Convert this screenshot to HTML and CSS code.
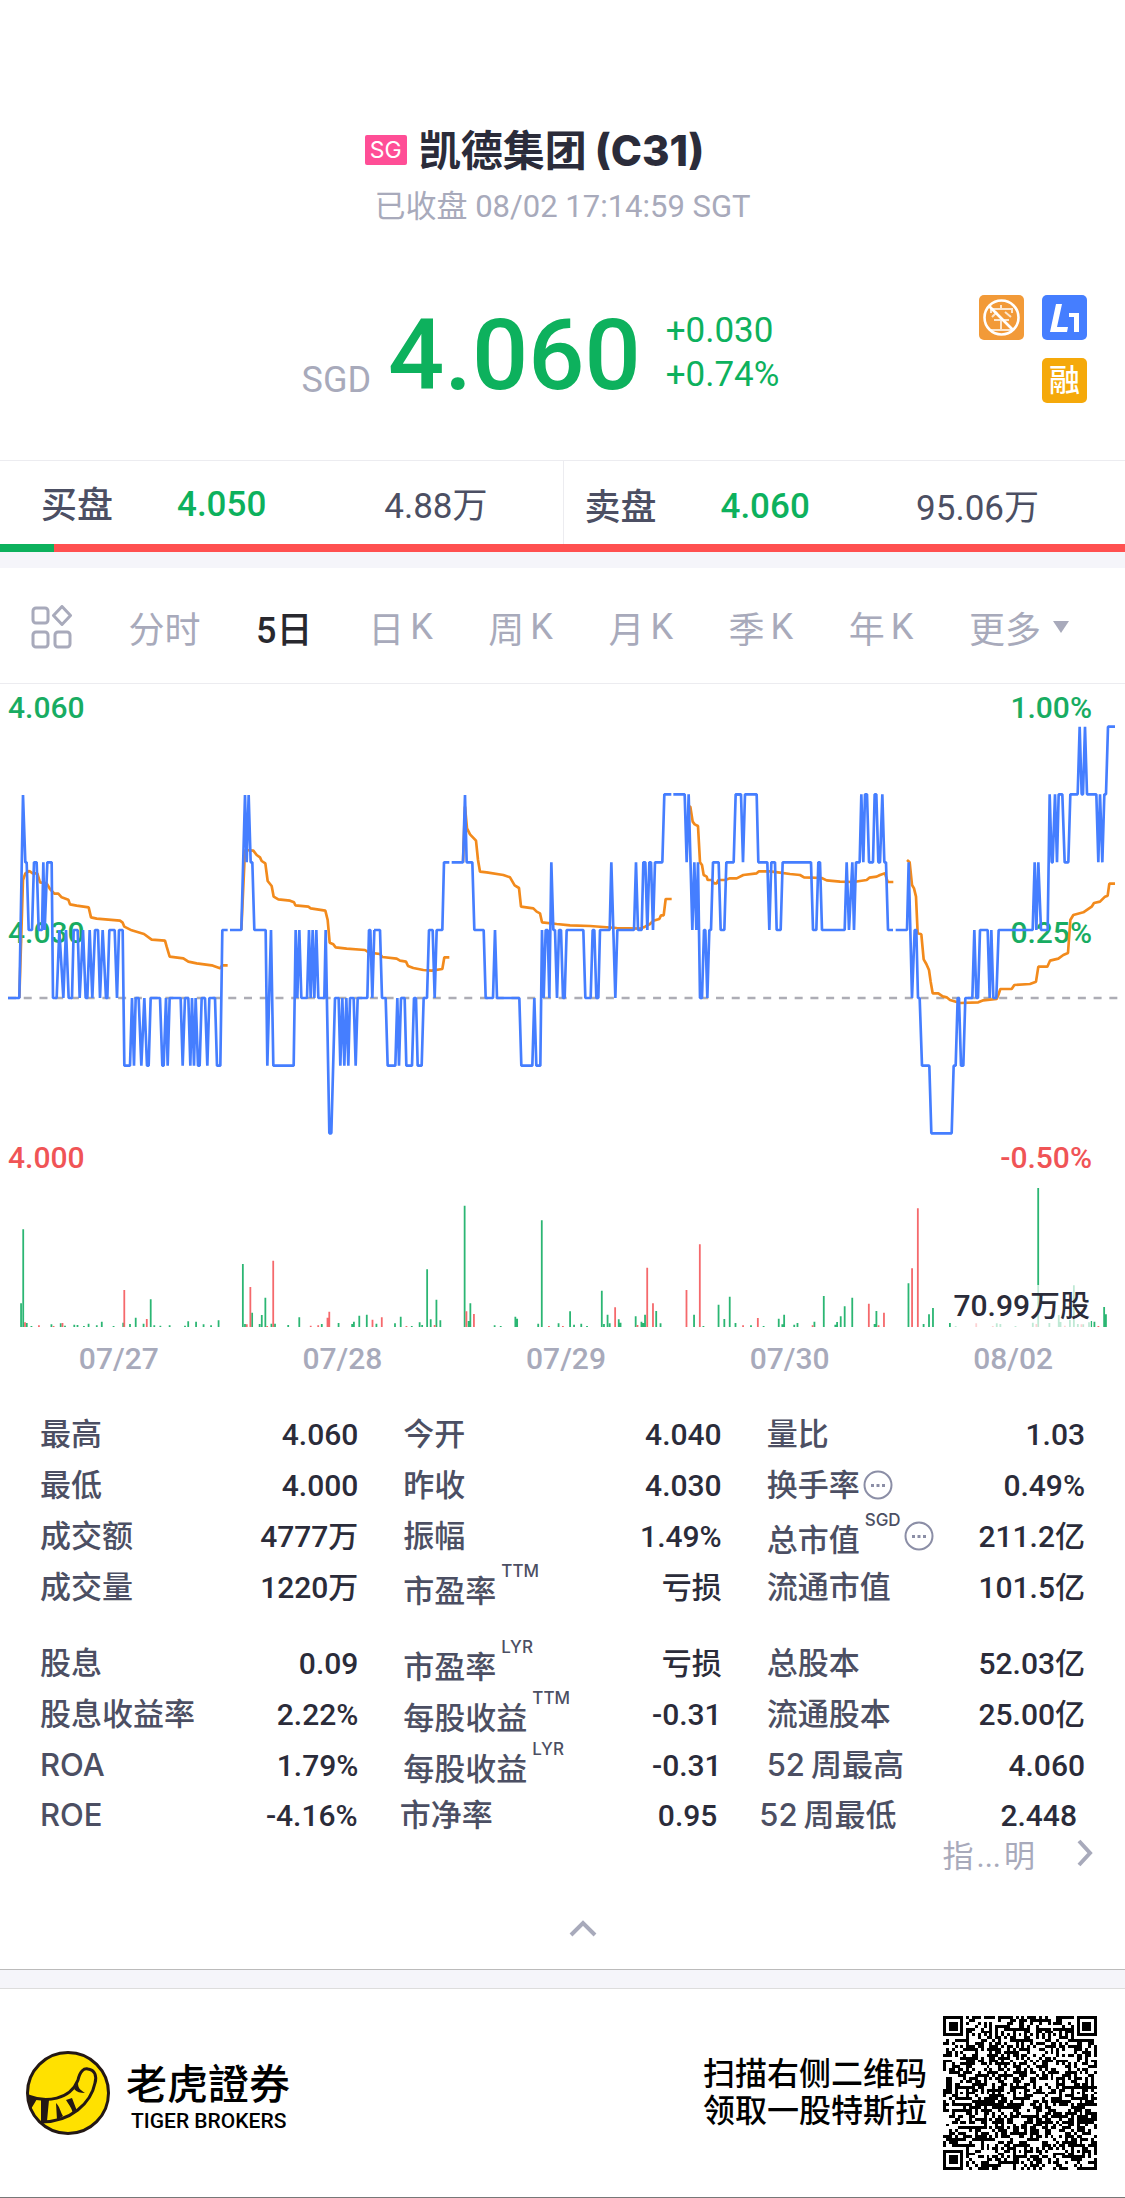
FILE: index.html
```html
<!DOCTYPE html>
<html lang="zh-CN">
<head>
<meta charset="utf-8">
<meta name="viewport" content="width=device-width, initial-scale=1">
<title>凯德集团 (C31)</title>
<link rel="stylesheet" href="styles.css">
</head>
<body>
<header class="head">
  <h1 class="title"><span class="market">SG</span><span class="company">凯德集团</span><span class="code">(C31)</span></h1>
  <p class="status">已收盘 08/02 17:14:59 SGT</p>
</header>

<section class="quote">
  <span class="currency">SGD</span>
  <strong class="price">4.060</strong>
  <div class="change"><span>+0.030</span><span>+0.74%</span></div>
  <div class="badges">
    <svg class="badge" viewBox="0 0 45 45"><rect width="45" height="45" rx="5" fill="#f29a38"/><g fill="none" stroke="#fff" stroke-width="2" opacity=".75"><path d="M22 10v4M12 18v-4h21v4M18 17l-5 5M26 17l6 5M15 25h15M22 25v10M11 35h23"/></g><circle cx="22.500" cy="22.500" r="17" fill="none" stroke="#fff" stroke-width="2.600"/><path d="M10 11l24 24" stroke="#fff" stroke-width="2.600"/></svg>
    <svg class="badge" viewBox="0 0 45 45"><rect width="45" height="45" rx="5" fill="#457eff"/><path d="M14 9h6l-5 23h11l-1 5H8zM27 18h10v19h-5V22h-5z" fill="#fff"/></svg>
    <span class="badge margin">融</span>
  </div>
</section>

<section class="book">
  <div class="side"><span class="name">买盘</span><span class="bid">4.050</span><span class="size">4.88万</span></div>
  <div class="side ask"><span class="name">卖盘</span><span class="bid">4.060</span><span class="size">95.06万</span></div>
</section>
<div class="ratio"><span class="ratio-buy" style="width:4.800%"></span></div>

<nav class="tabs">
  <button class="tab" aria-label="布局"><svg class="grid-icon" viewBox="0 0 42 44" fill="none" stroke="#a8aabb" stroke-width="3"><rect x="2" y="3" width="15" height="15" rx="3"/><path d="M31 1.500l8.500 9L31 19.500l-8.500-9z" stroke-linejoin="round"/><rect x="2" y="27" width="15" height="15" rx="3"/><rect x="24" y="27" width="15" height="15" rx="3"/></svg></button>
  <button class="tab">分时</button>
  <button class="tab active">5日</button>
  <button class="tab">日<span class="k">K</span></button>
  <button class="tab">周<span class="k">K</span></button>
  <button class="tab">月<span class="k">K</span></button>
  <button class="tab">季<span class="k">K</span></button>
  <button class="tab">年<span class="k">K</span></button>
  <button class="tab">更多<span class="caret"></span></button>
</nav>

<section class="chart">
  <div class="scale left"><span>4.060</span><span>4.030</span><span class="down">4.000</span></div>
  <div class="scale right"><span>1.00%</span><span>0.25%</span><span class="down">-0.50%</span></div>
  <svg class="plot" viewBox="0 0 3375 1458" fill="none">
    <g transform="translate(0 -12)" stroke-linejoin="bevel">
      <path d="M24 954H3355" stroke="#adadb5" stroke-width="8" stroke-dasharray="24 23.200"/>
      <g stroke="#f28a1c" stroke-width="8">
        <path d="M58 954L69 600L76 580L88 573L98 580H112L120 607L140 610L150 627L163 641H175L185 652L205 659L210 673L230 677L266 682L273 712L290 716L360 722L368 728L373 740L395 751L432 762L455 779L495 782L500 800L509 830L550 835L565 845L590 850L635 856L660 865L667 856H683"/>
        <path d="M724 750L735 510L760 512L770 525L780 532L785 543L796 550L803 603L815 618L821 650L835 658L870 662L882 667L886 676L925 680L932 685L976 692L983 720L989 788L1000 793L1007 802L1040 806L1095 810L1107 818L1140 822L1147 831L1190 836L1200 842L1218 845L1224 858L1240 864L1270 870L1295 872L1327 867L1333 832H1348"/>
        <path d="M1389 547L1395 380L1401 445L1410 463L1428 482L1434 540L1440 575L1460 577L1510 585L1530 592L1544 616L1557 624L1563 680L1600 685L1610 695L1620 700L1626 727L1670 732L1710 736L1770 738L1850 744L1920 746L1935 740L1950 732L1960 722L1978 717L1983 706H1991L1997 657H2015"/>
        <path d="M2065 380L2071 380L2078 425L2084 433L2094 438L2100 547L2106 555L2111 585L2120 590L2123 600H2135L2142 610H2150L2155 600H2175L2190 595H2210L2230 585L2270 580L2277 574H2310L2340 578L2370 582L2400 585L2412 592L2465 594L2480 601L2520 605L2560 606L2600 600L2608 593L2630 590L2640 585L2655 580L2663 606H2680"/>
        <path d="M2721 540L2729 547L2736 615L2742 625L2748 650L2753 760L2764 763L2771 838L2779 852L2787 870L2792 905L2798 940H2815L2828 949L2840 952L2850 960L2880 969L2935 967L2950 961L2990 957L2995 945L3001 927H3035L3043 915L3090 912L3108 905L3115 860H3142L3150 842L3175 836L3190 825L3204 819L3211 720L3220 705L3250 697L3275 680L3282 669L3300 665L3315 650L3323 647L3328 611H3345"/>
      </g>
      <g stroke="#457eff" stroke-width="8">
        <path d="M24 954H58L69 345L76 547H80L86 750H96L102 547H110L116 750H126L130 547L134 750L142 547H155L159 954H170L178 750L190 954L198 750L206 954H216L221 750H233L239 954L249 750L257 954H262L269 750L277 954L285 750H294L300 954L308 750L318 954H322L328 750H344L351 954L357 750H368L373 1157H390L396 954L402 1157L407 954H416L424 1157L433 954L441 1157H446L452 954H480L487 1157H491L498 954L503 1157L509 954H542L548 1157L555 954H565L571 1157L576 954L582 1157L587 954L594 1157H599L605 954H615L622 1157L628 954H645L651 1157H661L667 750H683M690 750H724L735 345L740 547L746 345L752 547H757L763 750H797L802 1157L813 750L820 1157H881L887 750L892 954L898 750L904 954H921L927 750L932 954L938 750L943 954L949 750L955 954H973L977 750L988 1360H994L1005 954H1016L1021 1157L1027 954L1033 1157L1039 954L1045 1157L1050 954H1061L1067 1157L1073 954H1102L1107 750H1111L1117 954L1123 750"/>
        <path transform="translate(1110)" d="M12 750H30L36 954H47L53 1157H76L82 954L87 1157L93 954H104L109 1157H126L132 954H138L143 1157H155L161 954H171L177 750H188L194 954L200 750H217L222 547H238M245 547H279L285 345L290 547H307L313 750H341L347 954H369L375 750L381 954H448L454 1157H487L493 954L499 1157H511L516 750L521 954L527 750H533L538 954L544 547L550 750H555L561 954L567 750H573L579 954H584L590 750H640L646 954H662L668 750H673L679 954H685L690 750H719L724 547L736 954L742 750H792L798 547L804 750H815L820 547H826L832 750L838 547H843L849 750L855 547H877L883 343H904M910 343H944L950 547L956 343L967 750L973 547L979 750L984 547L990 954H996L1002 750H1006L1012 954L1018 750H1023L1029 547H1046L1052 750H1063L1069 547H1091L1097 343H1113"/>
        <path transform="translate(2220)" d="M-13 343H3L9 547L15 343H50L55 547H82L88 750L94 547H105L110 750H122L128 547H213L219 750H229L235 547H240L246 750H314L320 547L327 750L337 547L342 750L348 547H359L364 343L370 547L375 343H381L387 547H399L404 343H409L415 547H420L427 343L433 547H438L444 750H459M467 750H501L506 547L516 954L524 750H529L534 954H539L546 1157H568L574 1360H635L641 1157H647L653 954H657L663 1157H670L676 954H697L703 750L709 954H714L720 750H743L749 954L754 750L760 954H769L776 750H878L884 547L889 750L895 547L903 750H923L929 343L935 547H938L945 343L951 547L956 343H967L974 547H985L991 343H1013L1019 140L1025 343H1029L1035 140L1041 343H1069L1075 547L1080 343L1087 547L1093 343H1098L1104 140H1125"/>
      </g>
    </g>
  </svg>
</section>

<section class="volume">
  <svg class="bars" viewBox="0 0 1125 157" fill="none">
    <g transform="scale(.35714 .33333)" stroke-width="5">
      <path stroke="#2bb673" d="M59 472V400M65 472V178M75 472V459M88 472v-4M144 472v-9M170 472v-12M182 472v-5M208 472v-8M217 472v-7M235 472v-4M248 472v-11M271 472v-6M285 472v-17M318 472v-4M345 472v-14M364 472v-10M380 472v-29M402 472v-11M422 472V388M432 472v-6M449 472v-5M475 472v-6M518 472v-5M527 472v-18M549 472v-17M570 472v-9M591 472v-6M612 472v-21M680 472V282M686 472v-10M706 472V428M727 472v-10M733 472V435M743 472V383M760 472v-11M770 472v-11M807 472v-7M838 472V442M901 472v-10M948 472v-13M986 472v-10M991 472v-17M1006 472V437M1027 472V434M1054 472v-11M1106 472v-12M1122 472V440M1153 472v-4M1175 472v-15M1182 472v-7M1196 472V298M1206 472v-24M1222 472V389M1233 472v-21M1301 472V107M1312 472v-19M1317 472V400M1385 472v-6M1402 472v-4M1443 472V440M1448 472V446M1507 472v-11M1517 472V151M1564 472v-12"/>
      <path stroke="#f5696c" d="M70 472v-15M109 472v-6M150 472v-4M175 472v-13M348 472V360M411 472V447M691 472v-9M701 472V351M748 472v-4M765 472V272M870 472v-5M891 472v-6M917 472V443M922 472V425M1043 472V449M1069 472V442M1138 472v-4M1217 472v-7M1306 472V424M1327 472V432M1537 472v-4"/>
    </g>
    <g transform="translate(560) scale(.36036 .33333)" stroke-width="5">
      <path stroke="#2bb673" d="M28 472V424M39 472v-8M59 472v-11M75 472v-4M116 472V362M122 472v-10M132 472V434M138 472v-12M163 472V448M168 472v-14M210 472V439M226 472v-17M231 472v-13M236 472V434M267 472V423M279 472v-12M372 472V434M398 472v-4M440 472V404M456 472v-25M471 472V380M487 472v-13M530 472v-6M565 472v-4M607 472V446M617 472v-9M622 472V434M650 472v-8M659 472v-13M706 472v-17M732 472V378M764 472v-8M769 472v-16M779 472V439M790 472V409M811 472V383M873 472v-10M878 472V423M967 472V340M1009 472v-10M1024 472V433M1035 472V414M1082 472v-13M1098 472v-4M1212 472v-12M1222 472v-10M1264 472v-4M1312 472v-14M1327 472V54M1358 472v-13M1384 472V435M1389 472v-16M1415 472v-22M1426 472V346M1437 472v-10M1452 472v-9M1468 472v-15M1474 472v-19M1483 472v-17M1510 472V411M1515 472V433"/>
      <path stroke="#f5696c" d="M8 472v-4M153 472V412M215 472v-7M242 472V293M258 472V400M351 472V360M388 472V223M508 472v-6M549 472V444M701 472v-6M857 472V401M884 472v-6M899 472V428M977 472V295M993 472V115M1155 472v-12M1201 472v-4M1322 472v-10M1401 472v-5M1447 472v-9M1494 472v-4"/>
    </g>
  </svg>
  <span class="volume-now">70.99万股</span>
</section>
<div class="dates"><span>07/27</span><span>07/28</span><span>07/29</span><span>07/30</span><span>08/02</span></div>

<section class="stats">
  <dl class="rows">
    <div class="cell"><dt>最高</dt><dd>4.060</dd></div>
    <div class="cell"><dt>今开</dt><dd>4.040</dd></div>
    <div class="cell"><dt>量比</dt><dd>1.03</dd></div>
    <div class="cell"><dt>最低</dt><dd>4.000</dd></div>
    <div class="cell"><dt>昨收</dt><dd>4.030</dd></div>
    <div class="cell"><dt>换手率<svg class="more" viewBox="0 0 30 30"><circle cx="15" cy="15" r="13.500" fill="none" stroke="#8b8ea6" stroke-width="2"/><path d="M8 14h3v3H8zM13.500 14h3v3h-3zM19 14h3v3h-3z" fill="#8b8ea6"/></svg></dt><dd>0.49%</dd></div>
    <div class="cell"><dt>成交额</dt><dd>4777万</dd></div>
    <div class="cell"><dt>振幅</dt><dd>1.49%</dd></div>
    <div class="cell"><dt><span class="low">总市值</span><sup>SGD</sup><svg class="more" viewBox="0 0 30 30"><circle cx="15" cy="15" r="13.500" fill="none" stroke="#8b8ea6" stroke-width="2"/><path d="M8 14h3v3H8zM13.500 14h3v3h-3zM19 14h3v3h-3z" fill="#8b8ea6"/></svg></dt><dd>211.2亿</dd></div>
    <div class="cell"><dt>成交量</dt><dd>1220万</dd></div>
    <div class="cell"><dt><span class="low">市盈率</span><sup>TTM</sup></dt><dd>亏损</dd></div>
    <div class="cell"><dt>流通市值</dt><dd>101.5亿</dd></div>
  </dl>
  <dl class="rows">
    <div class="cell"><dt>股息</dt><dd>0.09</dd></div>
    <div class="cell"><dt><span class="low">市盈率</span><sup>LYR</sup></dt><dd>亏损</dd></div>
    <div class="cell"><dt>总股本</dt><dd>52.03亿</dd></div>
    <div class="cell"><dt>股息收益率</dt><dd>2.22%</dd></div>
    <div class="cell"><dt><span class="low">每股收益</span><sup>TTM</sup></dt><dd>-0.31</dd></div>
    <div class="cell"><dt>流通股本</dt><dd>25.00亿</dd></div>
    <div class="cell"><dt>ROA</dt><dd>1.79%</dd></div>
    <div class="cell"><dt><span class="low">每股收益</span><sup>LYR</sup></dt><dd>-0.31</dd></div>
    <div class="cell"><dt><span class="num">52</span>周最高</dt><dd>4.060</dd></div>
  </dl>
  <dl class="rows last">
    <div class="cell"><dt>ROE</dt><dd>-4.16%</dd></div>
    <div class="cell"><dt>市净率</dt><dd>0.95</dd></div>
    <div class="cell"><dt><span class="num">52</span>周最低</dt><dd>2.448</dd></div>
  </dl>
  <a class="explain" href="#"><span>指<span class="dots">...</span>明</span><svg class="chevron" viewBox="0 0 16 28"><path d="M2 2l11 12L2 26" fill="none" stroke="#a8aabb" stroke-width="4"/></svg></a>
  <button class="collapse" aria-label="收起"><svg class="up" viewBox="0 0 28 17"><path d="M2 15L14 3l12 12" fill="none" stroke="#a8aabb" stroke-width="4"/></svg></button>
</section>

<footer class="foot">
  <svg class="logo" viewBox="0 0 84 84">
    <circle cx="42" cy="42" r="40.500" fill="#ffe100" stroke="#231815" stroke-width="3"/>
    <path d="M2 45C20 52 44 49 52 29C54 20 58 17 62 18C69 19 71 25 69 32C65 52 45 71 15 71" fill="none" stroke="#231815" stroke-width="3"/>
    <path d="M2 44l9 4-6 10zM15 49h8l-2 21h-6zM30 52c4 4 4 8 7 13l-6 4zM40 49l6-2 5 13-4 3c-1-6-4-9-7-14zM48 38l4-6c0 6 3 7 7 10-5 0-8-1-11-4z" fill="#231815"/>
  </svg>
  <div class="brand"><span class="brand-cn">老虎證券</span><span class="brand-en">TIGER BROKERS</span></div>
  <p class="invite">扫描右侧二维码<br>领取一股特斯拉</p>
  <svg class="qr" viewBox="0 0 53 53" shape-rendering="crispEdges" role="img" aria-label="二维码"><path id="modules" fill="#000"/></svg>
</footer>
<script src="qr.js"></script>
</body>
</html>
```
FILE: styles.css
```css
* { box-sizing: border-box; }
body { margin: 0; background: #fff; color: #2b2c3a; font-family: Roboto, "Noto Sans CJK SC", sans-serif; }
button { margin: 0; padding: 0; border: 0; background: none; font: inherit; color: inherit; }
svg { display: block; }
p, h1, dl, dd { margin: 0; }

.head { padding-top: 120px; text-align: center; }
.title { display: flex; justify-content: center; align-items: center; height: 60px; padding-right: 56px; font: 700 42px "Noto Sans CJK SC", sans-serif; }
.market { display: flex; align-items: center; height: 30px; margin-right: 12px; padding: 0 5px; border-radius: 2px; background: #ff4e96; color: #fff; font: 400 23px Inter, sans-serif; }
.company { padding-bottom: 6px; }
.code { margin-left: 8px; font-family: Inter, sans-serif; font-weight: 800; }
.status { height: 54px; line-height: 54px; font-size: 31px; color: #a8aabb; }

.quote { position: relative; display: flex; justify-content: center; align-items: flex-end; height: 227px; padding: 0 44px 59px 0; border-bottom: 1px solid #ececf0; color: #0db15d; }
.currency { margin-right: 17px; font-size: 36px; line-height: 42px; color: #a8aabb; }
.price { margin-bottom: 4px; font-size: 99px; font-weight: 500; line-height: 84px; }
.change { display: flex; flex-direction: column; margin: 0 0 4px 25px; font-size: 35px; line-height: 44px; }
.badges { position: absolute; top: 61px; right: 38px; display: flex; flex-wrap: wrap; justify-content: flex-end; gap: 18px; width: 110px; }
.badge { width: 45px; height: 45px; }
.margin { border-radius: 5px; background: #f5a90a; color: #fff; font-size: 31px; font-weight: 500; line-height: 45px; text-align: center; }

.book { display: grid; grid-template-columns: 1fr 1fr; height: 83px; font-size: 35px; color: #4c4f63; }
.side { display: grid; grid-template-columns: 136px 1fr auto; align-items: center; padding: 0 75px 0 41px; }
.ask { padding: 4px 86px 0 21px; border-left: 1px solid #ececf0; }
.bid { padding-top: 4px; color: #0db15d; font-weight: 500; }
.name { padding-bottom: 2px; font-size: 36px; font-weight: 500; }
.ratio { display: flex; height: 24px; border-bottom: 16px solid #f5f5fa; background: #ff5050; }
.ratio-buy { background: #0db15d; }

.tabs { display: flex; justify-content: space-between; align-items: center; height: 116px; padding: 2px 56px 0 31px; border-bottom: 1px solid #ececf0; font-size: 36px; color: #a8aabb; }
.tab { display: flex; align-items: center; }
.active { color: #28282e; font-weight: 500; }
.k { margin-left: 6px; }
.grid-icon { width: 42px; height: 44px; }
.caret { margin-left: 12px; border: solid transparent; border-width: 12px 8px 0; border-top-color: #a8aabb; }

.chart { position: relative; }
.plot { position: relative; width: 100%; }
.scale { position: absolute; top: 6px; bottom: -6px; display: flex; flex-direction: column; justify-content: space-between; font-size: 30px; font-weight: 500; line-height: 36px; color: #18ac62; }
.left { left: 8px; }
.right { right: 33px; text-align: right; }
.down { color: #f05456; }
.volume { position: relative; }
.bars { width: 100%; }
.volume-now { position: absolute; right: 34px; bottom: 0; padding: 0 1px; background: rgb(255 255 255 / 70%); font-size: 30px; font-weight: 500; line-height: 42px; }
.dates { display: grid; grid-template-columns: repeat(5, 1fr); padding-left: 7px; font-size: 30px; font-weight: 500; line-height: 64px; text-align: center; color: #a8aabb; }

.stats { display: flex; flex-direction: column; padding: 17px 40px 0; }
.rows { display: grid; grid-template-columns: repeat(3, 1fr); grid-auto-rows: 51px; column-gap: 45px; }
.rows + .rows { margin-top: 25px; }
.rows + .last { margin: -1px 8px 0 0; column-gap: 42px; }
.cell { display: flex; justify-content: space-between; align-items: center; }
dt { display: flex; align-items: center; font: 500 31px/46px Inter, "Noto Sans CJK SC", sans-serif; color: #4c4f63; }
dd { padding-top: 2px; font-size: 30px; font-weight: 500; line-height: 46px; }
.low { padding-top: 8px; }
sup { align-self: flex-start; margin-left: 5px; font-size: 17px; line-height: 22px; }
.more { width: 30px; height: 30px; margin-left: 3px; }
.num { margin-right: 6px; }
.explain { display: flex; align-items: center; align-self: flex-end; gap: 42px; height: 26px; margin-right: -8px; font-size: 31px; color: #a8aabb; text-decoration: none; }
.dots { padding: 0 3px; }
.chevron { width: 16px; height: 28px; }
.collapse { align-self: center; margin: 54px 0 33px 40px; }
.up { width: 28px; height: 17px; }

.foot { display: flex; align-items: center; height: 228px; padding: 0 28px 0 26px; border-top: 18px solid #f5f5fa; border-bottom: 1px solid #777; color: #000; box-shadow: inset 0 1px #ddd, 0 -1px #bbb; }
.logo { width: 84px; height: 84px; }
.brand { display: flex; flex-direction: column; margin-left: 16px; }
.brand-cn { font: 500 41px/52px "Noto Sans CJK TC", sans-serif; }
.brand-en { padding-left: 5px; margin-top: 4px; font-size: 21px; font-weight: 500; line-height: 20px; }
.invite { margin: 0 16px 0 auto; font-size: 32px; font-weight: 500; line-height: 37px; }
.qr { width: 154px; height: 154px; }
```
FILE: qr.js
```js
// Version 9 code: 53 x 53 modules with finder, timing and alignment patterns.
const N = 53;
const ring = (x, y, cx, cy) => Math.max(Math.abs(x - cx), Math.abs(y - cy));
let seed = 31;
const next = () => (seed = (seed * 1103515245 + 12345) % 2147483648) / 2147483648;
let d = '';
for (let y = 0; y < N; y++) {
  for (let x = 0; x < N; x++) {
    let on = next() < 0.5;
    if (x === 6 || y === 6) on = (x + y) % 2 === 0;
    for (const cx of [6, 26, 46]) for (const cy of [6, 26, 46]) {
      const r = ring(x, y, cx, cy);
      if (r <= 2) on = r !== 1;
    }
    for (const [cx, cy] of [[3, 3], [N - 4, 3], [3, N - 4]]) {
      const r = ring(x, y, cx, cy);
      if (r <= 4) on = r !== 2 && r !== 4;
    }
    if (on) d += `M${x} ${y}h1v1h-1z`;
  }
}
document.getElementById('modules').setAttribute('d', d);
```
